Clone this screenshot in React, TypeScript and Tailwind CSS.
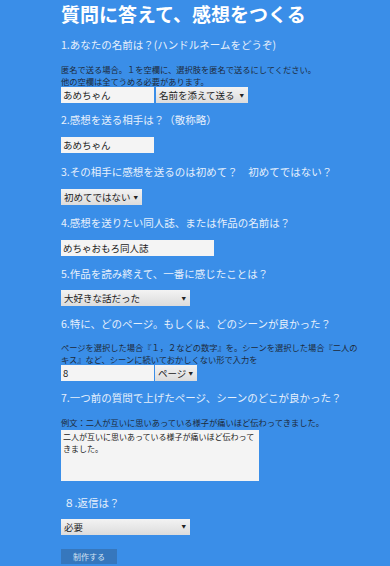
import React from "react";

const font = { fontFamily: '"Noto Sans CJK JP", "Noto Sans", sans-serif' };

const Label = ({ children }: { children: React.ReactNode }) => (
  <p className="h-[16px] text-[10.5px] leading-[16px] text-[#e6f0fc] whitespace-nowrap">{children}</p>
);

const Note = ({ children }: { children: React.ReactNode }) => (
  <p className="text-[8.25px] leading-[11.5px] text-[#1d2a3a]">{children}</p>
);

const TextBox = ({ value, w }: { value: string; w: string }) => (
  <div className={`${w} h-[16px] bg-[#f4f4f4] px-[2px] text-[9.5px] leading-[16px] text-[#222] whitespace-nowrap overflow-hidden`}>
    {value}
  </div>
);

const Select = ({ value, w }: { value: string; w: string }) => (
  <div
    className={`${w} h-[16px] flex items-center justify-between bg-gradient-to-b from-[#f3f3f3] to-[#dcdcdc] pl-[3px] pr-[4px] text-[9.5px] leading-[16px] text-[#222] whitespace-nowrap`}
  >
    <span>{value}</span>
    <span className="text-[4.5px] leading-none">▼</span>
  </div>
);

export default function App() {
  return (
    <div className="min-h-[566px] w-full bg-[#3a8ee8]" style={font}>
      <div className="ml-[61px] w-[300px]">
        <h1 className="h-[27px] text-[19px] font-bold leading-[27px] text-white whitespace-nowrap">
          質問に答えて、感想をつくる
        </h1>

        <div className="mt-[10px]">
          <Label>1.あなたの名前は？(ハンドルネームをどうぞ)</Label>
        </div>
        <div className="mt-[11px]">
          <Note>匿名で送る場合。１を空欄に、選択肢を匿名で送るにしてください。</Note>
          <Note>他の空欄は全てうめる必要があります。</Note>
        </div>
        <div className="flex gap-[2px]">
          <TextBox value="あめちゃん" w="w-[93px]" />
          <Select value="名前を添えて送る" w="w-[92px]" />
        </div>

        <div className="mt-[9px]">
          <Label>2.感想を送る相手は？（敬称略）</Label>
        </div>
        <div className="mt-[9px]">
          <TextBox value="あめちゃん" w="w-[93px]" />
        </div>

        <div className="mt-[11px]">
          <Label>3.その相手に感想を送るのは初めて？　初めてではない？</Label>
        </div>
        <div className="mt-[9px]">
          <Select value="初めてではない" w="w-[81px]" />
        </div>

        <div className="mt-[10px]">
          <Label>4.感想を送りたい同人誌、または作品の名前は？</Label>
        </div>
        <div className="mt-[9px]">
          <TextBox value="めちゃおもろ同人誌" w="w-[153px]" />
        </div>

        <div className="mt-[10px]">
          <Label>5.作品を読み終えて、一番に感じたことは？</Label>
        </div>
        <div className="mt-[8px]">
          <Select value="大好きな話だった" w="w-[129px]" />
        </div>

        <div className="mt-[10px]">
          <Label>6.特に、どのページ。もしくは、どのシーンが良かった？</Label>
        </div>
        <div className="mt-[10px]">
          <Note>
            ページを選択した場合『１，２などの数字』を。シーンを選択した場合『二人のキス』など、シーンに続いておかしくない形で入力を
          </Note>
        </div>
        <div className="flex gap-[1px]">
          <TextBox value="8" w="w-[93px]" />
          <Select value="ページ" w="w-[42px]" />
        </div>

        <div className="mt-[9px]">
          <Label>7.一つ前の質問で上げたページ、シーンのどこが良かった？</Label>
        </div>
        <div className="mt-[11px]">
          <Note>例文：二人が互いに思いあっている様子が痛いほど伝わってきました。</Note>
        </div>
        <div className="mt-[1px] h-[51px] w-[198px] bg-[#f4f4f4] px-[2px] pt-[1px] text-[8px] leading-[12.5px] text-[#222]">
          二人が互いに思いあっている様子が痛いほど伝わってきました。
        </div>

        <div className="mt-[14px] pl-[3px]">
          <Label>８.返信は？</Label>
        </div>
        <div className="mt-[8px]">
          <Select value="必要" w="w-[129px]" />
        </div>

        <div className="mt-[14px] flex">
          <button className="h-[15px] w-[56px] bg-[#3677bd] text-[8px] leading-[15px] text-[#d4e2f2]">
            制作する
          </button>
        </div>
      </div>
    </div>
  );
}
